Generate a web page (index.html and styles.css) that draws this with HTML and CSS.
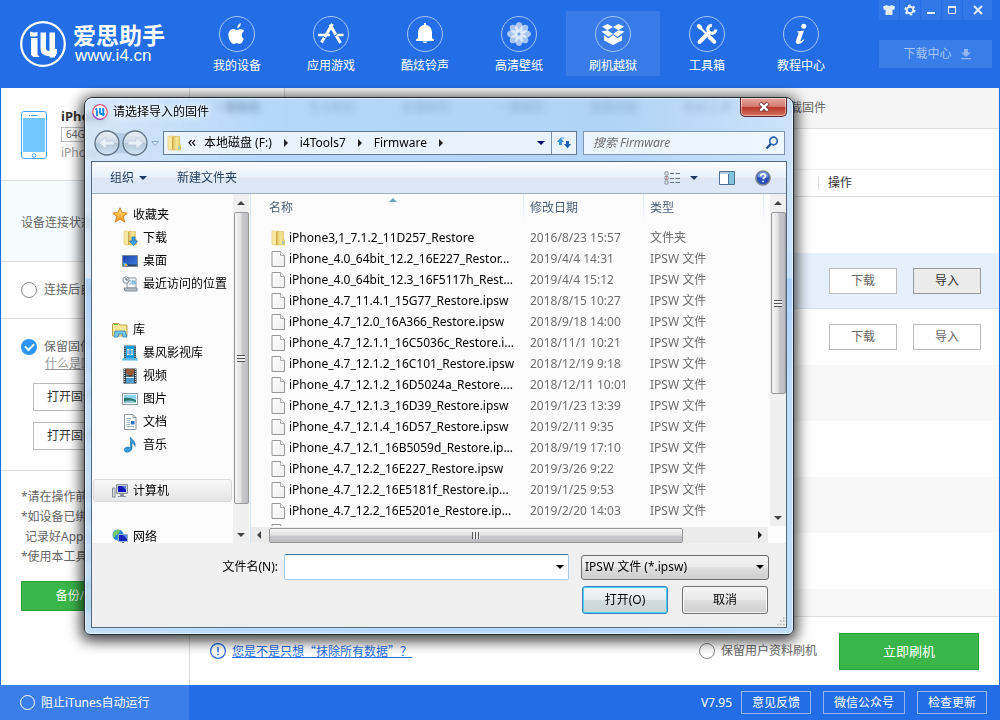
FILE: index.html
```html
<!DOCTYPE html>
<html lang="zh-CN">
<head>
<meta charset="utf-8">
<title>爱思助手</title>
<link rel="stylesheet" href="styles.css">
</head>
<body>
<svg class="defs" width="0" height="0" aria-hidden="true">
  <defs>
    <linearGradient id="gFolder" x1="0" x2="1" y1="0" y2="0"><stop offset="0" stop-color="#e3c768"/><stop offset=".5" stop-color="#f6e79a"/><stop offset="1" stop-color="#e6c962"/></linearGradient>
    <linearGradient id="gPage" x1="0" x2="1" y1="0" y2="1"><stop offset="0" stop-color="#fff"/><stop offset="1" stop-color="#eee"/></linearGradient>
    <linearGradient id="gStar" x1="0" x2="0" y1="0" y2="1"><stop offset="0" stop-color="#ffe27a"/><stop offset="1" stop-color="#ff9a1f"/></linearGradient>
    <linearGradient id="gScreen" x1="0" x2="1" y1="0" y2="1"><stop offset="0" stop-color="#1c3fa8"/><stop offset="1" stop-color="#3f86e0"/></linearGradient>
    <linearGradient id="gOrb" x1="0" x2="0" y1="0" y2="1"><stop offset="0" stop-color="#e9eff5"/><stop offset=".48" stop-color="#cddae6"/><stop offset=".52" stop-color="#b3c7d9"/><stop offset="1" stop-color="#d4e6f6"/></linearGradient>
    <symbol id="folder" viewBox="0 0 16 16"><path d="M2 1h7v14H3l-1-1z" fill="#f7e99f" stroke="#e3cb78" stroke-width=".6"/><path d="M7 1.500h6.500V9l1 1v5H8l-1-1z" fill="url(#gFolder)" stroke="#d2b04e" stroke-width=".5"/><path d="M6.500 2v13" stroke="#cda748"/><path d="M13 11v3" stroke="#5cb8e8"/></symbol>
    <symbol id="page" viewBox="0 0 14 16"><path d="M1 .5h8.500l4 4v11H1z" fill="url(#gPage)" stroke="#979797"/><path d="M9.500.5v4h4" fill="#fff" stroke="#979797" stroke-width=".8"/></symbol>
  </defs>
</svg>

<div class="app">
  <header class="header">
    <div class="brand">
      <svg class="brand-mark" viewBox="0 0 46 46"><circle cx="23" cy="23" r="21.800" fill="none" stroke="#fff" stroke-width="2.200"/><g fill="#fff"><path d="M10 10.500q4 1.500 7.500.5v4q-4 1-7.500 0z"/><path d="M11 17h6.500v16.500l2 2.500h-6L11 34z"/><path d="M20.500 11.500h5.500V27q0 3 3 3v5q-8.500 0-8.500-7.500z"/><path d="M29.500 11.500H35V28h2v5h-2v3.500h-5.500z"/><path d="M25 30h11v5H27z"/></g></svg>
      <div class="brand-text"><span class="brand-name">爱思助手</span><span class="brand-url">www.i4.cn</span></div>
    </div>
    <nav class="nav">
      <a class="nav-item" href="#"><svg viewBox="0 0 36 36"><circle class="ring" cx="18" cy="18" r="17.500"/><path fill="#fff" d="M18.200 12.200c.2-2.600 1.600-4.600 3.600-5.200.2 2.500-1.400 4.800-3.600 5.200zM24.800 22.800c-.8 2.400-2.300 5.200-4.200 5.200-1.100 0-1.500-.7-2.900-.7s-1.900.7-2.900.7c-2.400 0-5.400-4.800-5.400-9 0-3.600 2.200-5.900 4.800-5.900 1.500 0 2.600 1 3.500 1s2.200-1.100 4-1.100c1.500 0 2.700.7 3.500 1.900-3.300 1.900-2.800 6.400-.4 7.900z"/></svg>我的设备</a>
      <a class="nav-item" href="#"><svg viewBox="0 0 36 36"><circle class="ring" cx="18" cy="18" r="17.500"/><g fill="none" stroke="#fff"><path stroke-width="3" d="M19.500 8L8.500 26.500M17 8.500L27.500 27"/><path stroke-width="2.500" d="M5 19h12M22 19h8.500"/><path stroke="#236ee7" stroke-width="1" d="M10 20.500l3 2M21.500 20l3-2"/></g></svg>应用游戏</a>
      <a class="nav-item" href="#"><svg viewBox="0 0 36 36"><circle class="ring" cx="18" cy="18" r="17.500"/><path fill="#fff" d="M17 7h2v2c4 .6 6 3.800 6 8v5l2 1.500V25H9v-1.500L11 22v-5c0-4.200 2-7.400 6-8zM15.500 25.500h5q-.5 1.500-2.500 1.500t-2.500-1.500z"/></svg>酷炫铃声</a>
      <a class="nav-item" href="#"><svg viewBox="0 0 36 36"><circle class="ring" cx="18" cy="18" r="17.500"/><g fill="#fff" fill-opacity=".6"><ellipse cx="18" cy="11.500" rx="3.800" ry="5.500"/><ellipse cx="18" cy="24.500" rx="3.800" ry="5.500"/><ellipse cx="11.500" cy="18" rx="5.500" ry="3.800"/><ellipse cx="24.500" cy="18" rx="5.500" ry="3.800"/><g transform="rotate(45 18 18)"><ellipse cx="18" cy="11.500" rx="3.800" ry="5.500"/><ellipse cx="18" cy="24.500" rx="3.800" ry="5.500"/><ellipse cx="11.500" cy="18" rx="5.500" ry="3.800"/><ellipse cx="24.500" cy="18" rx="5.500" ry="3.800"/></g></g><circle cx="18" cy="18" r="1.500" fill="#75a3ef"/></svg>高清壁纸</a>
      <a class="nav-item nav-active" href="#"><svg viewBox="0 0 36 36"><circle class="ring" cx="18" cy="18" r="17.500"/><path fill="#fff" d="M7 10.500l5.500-2.500 5.500 3-5.500 3.200zM18 11l5.500-3 5.500 2.500-5.500 3.700zM6.500 15.500l6-1.300 5.500 3.800-4.500 2.700zM18 18l5.500-3.800 6 1.300-7 5.200zM9 19.500l4.500 2.700 4.500-3.200 4.500 3.200 4.500-2.700v5L18 29l-9-4.500z"/></svg>刷机越狱</a>
      <a class="nav-item" href="#"><svg viewBox="0 0 36 36"><circle class="ring" cx="18" cy="18" r="17.500"/><g fill="none" stroke="#fff"><path stroke-width="2" d="M10 10.500l8 8"/><path stroke-width="4" stroke-linecap="round" d="M9.800 10l1.500 1.500M20.500 21l4.800 4.800M10.500 26l9-9"/><path stroke-width="3.200" d="M22.800 9.300a4 4 0 1 0 4 4.200"/></g></svg>工具箱</a>
      <a class="nav-item" href="#"><svg viewBox="0 0 36 36"><circle class="ring" cx="18" cy="18" r="17.500"/><circle cx="20.800" cy="10.300" r="2.500" fill="#fff"/><path fill="#fff" d="M14 15.500l7-1-3.500 10c-.3 1.200.5 1.200 3-1.200l.7.700c-2.400 3-4.400 4-6.200 4-2 0-2.500-1.500-2-3.200l2.500-7.300c.2-.8-.2-1.200-1.500-1.200z"/></svg>教程中心</a>
    </nav>
    <div class="header-right">
      <div class="window-buttons">
        <button aria-label="皮肤"><svg viewBox="0 0 14 14"><path fill="#e4edfc" d="M4.500 2Q7 4 9.500 2L13 3.500l-.8 3.500-1.700-.5V12h-7V6.500L1.800 7 1 3.500z"/></svg></button>
        <button aria-label="设置"><svg viewBox="0 0 14 14"><circle cx="7" cy="7" r="3.300" fill="none" stroke="#e4edfc" stroke-width="2"/><circle cx="7" cy="7" r="4.700" fill="none" stroke="#e4edfc" stroke-width="1.800" stroke-dasharray="2.500 2.400"/></svg></button>
        <button aria-label="最小化"><svg viewBox="0 0 14 14"><path d="M3 10h8" stroke="#e4edfc" stroke-width="2"/></svg></button>
        <button aria-label="最大化"><svg viewBox="0 0 14 14"><path d="M3.500 3.500h7v7h-7z" fill="none" stroke="#e4edfc"/><path d="M3 4h8" stroke="#e4edfc" stroke-width="2"/></svg></button>
        <button class="wide" aria-label="关闭"><svg viewBox="0 0 14 14"><path d="M3 3l8 8M11 3l-8 8" stroke="#e4edfc" stroke-width="2"/></svg></button>
      </div>
      <button class="download-center">下载中心<svg viewBox="0 0 12 12"><path fill="#91b6f3" d="M4 1h4v3.500h3L6 9 1 4.500h3zM1 10h10v1.200H1z"/></svg></button>
    </div>
  </header>

  <main class="main">
    <aside class="side">
      <section class="device">
        <svg class="phone" viewBox="0 0 26 48"><rect x=".5" y=".5" width="25" height="47" rx="2.500" fill="#fff" stroke="#45a5ff"/><path fill="#73c7ff" d="M2 7h22v34H2z"/><path d="M8 4.500h1M10 4.500h7" stroke="#45a5ff"/><circle cx="13" cy="44.500" r="1.800" fill="none" stroke="#45a5ff"/></svg>
        <div class="device-info"><strong>iPhone</strong><span class="capacity">64G</span><span class="device-type">iPhone</span></div>
      </section>
      <section class="status">设备连接状态</section>
      <section class="connect"><label class="option"><input type="radio" name="c">连接后自动</label></section>
      <section class="keep">
        <label class="option"><input type="checkbox" checked>保留固件</label>
        <a class="what" href="#">什么是固件</a>
        <button class="plain-btn">打开固件目录</button>
        <button class="plain-btn">打开固件列表</button>
      </section>
      <section class="notes">
        <p>*请在操作前备</p><p>*如设备已绑定</p><p class="indent">记录好Apple</p><p>*使用本工具箱</p>
        <button class="green-btn">备份/恢复数据</button>
      </section>
    </aside>
    <div class="content">
      <div class="tabs"><a class="tab tab-on" href="#">一键刷机</a><a class="tab" href="#">专业刷机</a><a class="tab" href="#">批量刷机</a><a class="tab" href="#">一键越狱</a><a class="tab" href="#">智能功能</a><a class="tab" href="#">刷机工具</a><a class="tab" href="#">下载固件</a></div>
      <div class="filter"></div>
      <div class="grid-head"><span>操作</span></div>
      <div class="grid-row"></div>
      <div class="grid-row chosen"><button class="cell-btn">下载</button><button class="cell-btn hot">导入</button></div>
      <div class="grid-row"><button class="cell-btn">下载</button><button class="cell-btn">导入</button></div>
      <div class="stripes"></div>
      <div class="actions">
        <svg class="notice" viewBox="0 0 16 16"><circle cx="8" cy="8" r="7.400" fill="none" stroke="#236ee7" stroke-width="1.200"/><path d="M8 4v5.500M8 10.700v1.600" stroke="#236ee7" stroke-width="1.400"/></svg>
        <a class="erase" href="#">您是不是只想“抹除所有数据”？</a>
        <label class="option retain"><input type="radio" name="r">保留用户资料刷机</label>
        <button class="green-btn flash">立即刷机</button>
      </div>
    </div>
  </main>

  <footer class="footer">
    <label class="option itunes"><input type="radio" name="i">阻止iTunes自动运行</label>
    <div class="footer-right"><span>V7.95</span><button>意见反馈</button><button class="mid">微信公众号</button><button>检查更新</button></div>
  </footer>

  <div class="dialog" role="dialog" aria-label="请选择导入的固件">
    <div class="titlebar">
      <svg class="title-icon" viewBox="0 0 16 16"><circle cx="8" cy="8" r="7.300" fill="#fff" stroke="#e24f78" stroke-width="1.200"/><path d="M1 10a7.300 7.300 0 0 0 10 4.700" fill="none" stroke="#9a56d8" stroke-width="1.300"/><path d="M3.500 5h1.800M4.900 6.200v6M8 4v5q0 1 1 1h3.500M11.200 4v8" fill="none" stroke="#1788ee" stroke-width="1.900"/></svg>
      <span class="title-text">请选择导入的固件</span>
      <button class="close" aria-label="关闭"><svg viewBox="0 0 12 10"><path d="M2 1l8 8M10 1L2 9" stroke="#5d2b2b" stroke-width="4"/><path d="M2.300 1.300l7.400 7.400M9.700 1.300L2.300 8.700" stroke="#fff" stroke-width="2.400"/></svg></button>
    </div>
    <div class="locbar">
      <svg class="orbs" viewBox="0 0 66 28"><path d="M14 1.500q14 5 28 0v25q-14-5-28 0z" fill="#a9c3dc" opacity=".7"/><circle cx="14" cy="14" r="12" fill="url(#gOrb)" stroke="#607386" stroke-width="1.300"/><circle cx="42" cy="14" r="12" fill="url(#gOrb)" stroke="#607386" stroke-width="1.300"/><path d="M6 14l7-6v4h8v4h-8v4zM50 14l-7-6v4h-8v4h8v4z" fill="#e7f1fa" stroke="#bccddd" stroke-width=".8"/><path d="M58.500 12.500h7L62 16.500z" fill="#dceafa" stroke="#8ba9c9"/></svg>
      <div class="address">
        <svg class="i16" viewBox="0 0 16 16"><use href="#folder"/></svg>
        <svg class="chev" viewBox="0 0 8 8"><path d="M3.500 1L1 3.800l2.500 2.800M7 1L4.500 3.800 7 6.600" fill="none" stroke="#111" stroke-width="1.200"/></svg>
        <span class="drive">本地磁盘 (F:)</span><i class="tri-right"></i><span>i4Tools7</span><i class="tri-right"></i><span>Firmware</span><i class="tri-right"></i>
        <i class="tri-down navy"></i>
        <button class="refresh" aria-label="刷新"><svg viewBox="0 0 16 16"><path d="M1 7l3.500-4.500L8 7H6v3H3V7z" fill="#3e95dc"/><path d="M5 3h3" stroke="#3e95dc"/><path d="M15 9l-3.500 4.500L8 9h2V6h3v3z" fill="#1f5eb0"/></svg></button>
      </div>
      <label class="search"><input type="text" placeholder="搜索 Firmware" aria-label="搜索"><svg viewBox="0 0 14 14"><circle cx="8.500" cy="5" r="3.800" fill="#eef7ff" stroke="#2a67b5" stroke-width="1.700"/><path d="M5.800 8L1.500 12.500" stroke="#24508e" stroke-width="2.400"/></svg></label>
    </div>
    <div class="client">
      <div class="toolbar">
        <button class="tool">组织<i class="tri-down dark"></i></button>
        <button class="tool">新建文件夹</button>
        <button class="tool view" aria-label="更改视图"><svg viewBox="0 0 16 14"><path d="M1 1h3v3H1zM1 5.500h3v3H1zM1 10h3v3H1z" fill="#fff" stroke="#7d8794" stroke-width=".9"/><path d="M2 7h1" stroke="#e22"/><path d="M6 2.500h4M11.500 2.500H16M6 7.500h4M11.500 7.500H16M6 11.500h4M11.500 11.500H16" stroke="#63738c"/></svg><i class="tri-down dark"></i></button>
        <button class="tool preview" aria-label="预览窗格"><svg viewBox="0 0 16 14"><path d="M.5.500h15v13H.5z" fill="#fff" stroke="#4e6f94"/><path d="M1 2h14" stroke="#b2c8df" stroke-width="2"/><path d="M10 1h5v12h-5z" fill="#7fc3dc"/><path d="M9.500 3v10" stroke="#4e6f94"/></svg></button>
        <button class="tool help" aria-label="帮助"><svg viewBox="0 0 16 16"><circle cx="8" cy="8" r="7" fill="#2950b7" stroke="#7b8290" stroke-width="1.600"/><path d="M2.500 7a5.500 5.500 0 0 1 11 0q-5 2-11 0z" fill="#6c94e4"/><path d="M5.700 6.200q0-2.400 2.400-2.400 2.300 0 2.300 2 0 1.200-1.200 1.900-.9.600-.9 1.500M8.200 10.700v1.600" fill="none" stroke="#fff" stroke-width="1.800"/></svg></button>
      </div>
      <div class="browser">
        <ul class="tree">
          <li><svg class="i16" viewBox="0 0 16 16"><path d="M8 .8l2.100 4.900 5.200.4-4 3.500 1.300 5.400L8 12.100 3.400 15l1.300-5.400-4-3.500 5.200-.4z" fill="url(#gStar)" stroke="#d87a1b" stroke-width=".9"/></svg>收藏夹</li>
          <li class="sub"><svg class="i16" viewBox="0 0 16 16"><use href="#folder"/><path d="M10 7h3v4h2.500L11.500 15.500 7.500 11H10z" fill="#35a4ef" stroke="#1365b3" stroke-width=".7"/></svg>下载</li>
          <li class="sub"><svg class="i16" viewBox="0 0 16 16"><path d="M.5 2.500h15v11H.5z" fill="url(#gScreen)" stroke="#7b8794"/><path d="M1 11.500h14V13H1z" fill="#294063"/><path d="M1.500 13V9q3 1 4.500 4z" fill="#62b5e8"/><path d="M3 11h2v2H3z" fill="#f5c42c"/></svg>桌面</li>
          <li class="sub"><svg class="i16" viewBox="0 0 16 16"><path d="M5 2h9v10H5z" fill="#f4f8fb" stroke="#8b97a2"/><path d="M7 5h2M7 8h2M10 5h3v3h-3z" stroke="#6ab5de" fill="#9ccbe8"/><path d="M2 12h13v3H3z" fill="#b7bfc6" stroke="#848e98"/><circle cx="4" cy="4" r="3.200" fill="#eef3f8" stroke="#808c99"/><path d="M4 2v2h2" fill="none" stroke="#555"/></svg>最近访问的位置</li>
          <li class="gap"></li>
          <li><svg class="i16" viewBox="0 0 16 16"><path d="M.5 3l1-1.500h5L8 3h7v11H.5z" fill="#f8e594" stroke="#bca04a"/><path d="M2 2.500h4" stroke="#5dc346"/><path d="M2 15l1-6h10l2 6h-4l-.5-3h-4L6 15z" fill="#74c6e9" stroke="#3989b6" stroke-width=".8"/></svg>库</li>
          <li class="sub"><svg class="i16" viewBox="0 0 16 16"><path d="M2 .5h12v13H2z" fill="#355566"/><path d="M4 1h8v12H4z" fill="#16a0f4"/><path d="M3 1v12M13 1v12" stroke="#b9d7e6" stroke-dasharray="1 1"/><path d="M5 4h6v6H5z" fill="#fff"/><path d="M5 6h6M8 4v6M5 8h6" stroke="#1684dd"/><path d="M1 13h14l1 2.500H0z" fill="#5dbaf0"/></svg>暴风影视库</li>
          <li class="sub"><svg class="i16" viewBox="0 0 16 16"><path d="M1.500.5h13v15h-13z" fill="#26343c"/><path d="M4 1h8v14H4z" fill="#4e9cc9"/><path d="M4 1h8v5L8 9 4 5z" fill="#995a3c"/><path d="M4 8l4 1 4-2v3H4z" fill="#c9e5ee"/><path d="M4 8h8" stroke="#222"/><path d="M2.700 1v14M13.300 1v14" stroke="#fff" stroke-dasharray="1 1"/></svg>视频</li>
          <li class="sub"><svg class="i16" viewBox="0 0 16 16"><path d="M.5 2.500h15v11H.5z" fill="#fff" stroke="#8c969c"/><path d="M2 4h12v8H2z" fill="#8fd3f2"/><path d="M2 7q5-1 12 2v3H2z" fill="#237a6b"/><path d="M2 10.500q6-2 12 .5v1H2z" fill="#8dc7da"/></svg>图片</li>
          <li class="sub"><svg class="i16" viewBox="0 0 16 16"><path d="M2.500.5H11l3 3v12H2.500z" fill="#fff" stroke="#8c969c"/><path d="M11 .5v3h3" fill="none" stroke="#8c969c"/><path d="M4.500 4.500H9M4.500 6.500H8M4.500 8.500H8M4.500 10.500H8M4.500 12.500H12" stroke="#9bb3c7"/><path d="M9 7h3.500v3.500H9z" fill="#286fce"/></svg>文档</li>
          <li class="sub"><svg class="i16" viewBox="0 0 16 16"><path d="M9 .5c1 3 5 3.500 4 9-.5-2-1.500-3-3-3.500v6C9 14.500 6 15.500 4 15c-3-1-2-5 2-5l2.500.5V.5z" fill="#329bd8" stroke="#17679f" stroke-width=".6"/></svg>音乐</li>
          <li class="gap"></li>
          <li class="current"><svg class="i16" viewBox="0 0 16 16"><path d="M.5 5h2.500v9H.5z" fill="#dce3e6" stroke="#838c93"/><path d="M4.500 1.500h11v9h-11z" fill="#c7ced6" stroke="#8b939b"/><path d="M6 3h8v6H6z" fill="#1414b8"/><path d="M10 3h4v4z" fill="#567dea"/><path d="M8 11h4v2h2v1H6v-1h2z" fill="#8d959d"/></svg>计算机</li>
          <li class="gap"></li>
          <li><svg class="i16" viewBox="0 0 16 16"><circle cx="6" cy="6" r="5.500" fill="#2889d9"/><path d="M2 3q3-3 6-2l-1 3-3 2-2 3q-2-3 0-6zM8 5l3 1-2 4-3-1z" fill="#72d064"/><path d="M6.500 5.500h9v7h-9z" fill="#1322b9" stroke="#9ab1d7"/><path d="M11 6h4v4z" fill="#5a82ee"/><path d="M10 13h2v3h-2z" fill="#737f99"/></svg>网络</li>
        </ul>
        <div class="vscroll tree-scroll"><i class="tri-up"></i><div class="thumb"><b class="grip-v"></b></div><i class="tri-down end"></i></div>
        <div class="files">
          <div class="files-top">
            <div class="list">
              <table>
                <colgroup><col><col class="c-date"><col class="c-type"><col class="c-rest"></colgroup>
                <thead><tr><th><div class="name-head">名称<i class="sort"></i></div></th><th>修改日期</th><th>类型</th><th></th></tr></thead>
                <tbody>
                  <tr><td><span class="file"><svg class="i16" viewBox="0 0 16 16"><use href="#folder"/></svg>iPhone3,1_7.1.2_11D257_Restore</span></td><td>2016/8/23 15:57</td><td>文件夹</td><td></td></tr>
                  <tr><td><span class="file"><svg class="i16" viewBox="0 0 14 16"><use href="#page"/></svg>iPhone_4.0_64bit_12.2_16E227_Restor...</span></td><td>2019/4/4 14:31</td><td>IPSW 文件</td><td></td></tr>
                  <tr><td><span class="file"><svg class="i16" viewBox="0 0 14 16"><use href="#page"/></svg>iPhone_4.0_64bit_12.3_16F5117h_Rest...</span></td><td>2019/4/4 15:12</td><td>IPSW 文件</td><td></td></tr>
                  <tr><td><span class="file"><svg class="i16" viewBox="0 0 14 16"><use href="#page"/></svg>iPhone_4.7_11.4.1_15G77_Restore.ipsw</span></td><td>2018/8/15 10:27</td><td>IPSW 文件</td><td></td></tr>
                  <tr><td><span class="file"><svg class="i16" viewBox="0 0 14 16"><use href="#page"/></svg>iPhone_4.7_12.0_16A366_Restore.ipsw</span></td><td>2018/9/18 14:00</td><td>IPSW 文件</td><td></td></tr>
                  <tr><td><span class="file"><svg class="i16" viewBox="0 0 14 16"><use href="#page"/></svg>iPhone_4.7_12.1.1_16C5036c_Restore.i...</span></td><td>2018/11/1 10:21</td><td>IPSW 文件</td><td></td></tr>
                  <tr><td><span class="file"><svg class="i16" viewBox="0 0 14 16"><use href="#page"/></svg>iPhone_4.7_12.1.2_16C101_Restore.ipsw</span></td><td>2018/12/19 9:18</td><td>IPSW 文件</td><td></td></tr>
                  <tr><td><span class="file"><svg class="i16" viewBox="0 0 14 16"><use href="#page"/></svg>iPhone_4.7_12.1.2_16D5024a_Restore....</span></td><td>2018/12/11 10:01</td><td>IPSW 文件</td><td></td></tr>
                  <tr><td><span class="file"><svg class="i16" viewBox="0 0 14 16"><use href="#page"/></svg>iPhone_4.7_12.1.3_16D39_Restore.ipsw</span></td><td>2019/1/23 13:39</td><td>IPSW 文件</td><td></td></tr>
                  <tr><td><span class="file"><svg class="i16" viewBox="0 0 14 16"><use href="#page"/></svg>iPhone_4.7_12.1.4_16D57_Restore.ipsw</span></td><td>2019/2/11 9:35</td><td>IPSW 文件</td><td></td></tr>
                  <tr><td><span class="file"><svg class="i16" viewBox="0 0 14 16"><use href="#page"/></svg>iPhone_4.7_12.1_16B5059d_Restore.ip...</span></td><td>2018/9/19 17:10</td><td>IPSW 文件</td><td></td></tr>
                  <tr><td><span class="file"><svg class="i16" viewBox="0 0 14 16"><use href="#page"/></svg>iPhone_4.7_12.2_16E227_Restore.ipsw</span></td><td>2019/3/26 9:22</td><td>IPSW 文件</td><td></td></tr>
                  <tr><td><span class="file"><svg class="i16" viewBox="0 0 14 16"><use href="#page"/></svg>iPhone_4.7_12.2_16E5181f_Restore.ip...</span></td><td>2019/1/25 9:53</td><td>IPSW 文件</td><td></td></tr>
                  <tr><td><span class="file"><svg class="i16" viewBox="0 0 14 16"><use href="#page"/></svg>iPhone_4.7_12.2_16E5201e_Restore.ip...</span></td><td>2019/2/20 14:03</td><td>IPSW 文件</td><td></td></tr>
                  <tr><td><span class="file"><svg class="i16" viewBox="0 0 14 16"><use href="#page"/></svg></span></td><td></td><td></td><td></td></tr>
                </tbody>
              </table>
            </div>
            <div class="vscroll list-scroll"><i class="tri-up"></i><div class="thumb"><b class="grip-v"></b></div><i class="tri-down end"></i></div>
          </div>
          <div class="hscroll"><i class="tri-left"></i><div class="hthumb"><b class="grip-h"></b></div><i class="tri-right end"></i></div>
        </div>
      </div>
      <div class="form">
        <label for="fname">文件名(N):</label>
        <div class="combo"><input id="fname" type="text"><i class="tri-down black"></i></div>
        <div class="filetype"><select aria-label="文件类型"><option>IPSW 文件 (*.ipsw)</option></select><i class="tri-down black"></i></div>
        <div class="form-buttons"><button class="win-btn default">打开(O)</button><button class="win-btn">取消</button></div>
        <svg class="grip" viewBox="0 0 9 9"><path d="M7 1h1.500M4 4h1.500M7 4h1.500M1 7.500h1.500M4 7.500h1.500M7 7.500h1.500" stroke="#b5b5b5" stroke-width="1.500"/></svg>
      </div>
    </div>
  </div>
</div>
</body>
</html>
```

FILE: styles.css
```css
* { box-sizing: border-box; }
body { margin: 0; font: 12px/18px "Noto Sans", "Noto Sans CJK SC", sans-serif; color: #666; }
button, input, select { font: inherit; color: inherit; margin: 0; padding: 0; border: 0; background: none; }
a { color: inherit; text-decoration: none; }
p, ul { margin: 0; padding: 0; }
svg { display: block; flex: none; }
.defs { position: absolute; }
.app { position: relative; min-height: 100vh; display: flex; flex-direction: column; }

/* header */
.header { display: flex; background: #236ee7; color: #fff; height: 88px; }
.brand { width: 190px; padding: 0 0 0 20px; display: flex; align-items: center; gap: 7px; }
.brand-mark { width: 46px; height: 46px; }
.brand-text { display: flex; flex-direction: column; gap: 2px; }
.brand-name { font: bold 23px/22px "Noto Sans CJK SC", sans-serif; }
.brand-url { font: 17px/18px "Liberation Sans", sans-serif; padding-left: 2px; }
.nav { display: flex; padding-top: 11px; flex: 1; }
.nav-item { width: 94px; height: 65px; padding-top: 5px; display: flex; flex-direction: column; align-items: center; gap: 5px; }
.nav-item svg { width: 36px; height: 36px; }
.ring { fill: none; stroke: #a7c5f5; stroke-width: 1; }
.nav-active { background: #397ce9; }
.header-right { width: 113px; margin-right: 8px; display: flex; flex-direction: column; gap: 20px; }
.window-buttons { display: flex; gap: 1px; }
.window-buttons button { width: 20px; height: 20px; background: #3177e8; display: grid; place-items: center; }
.window-buttons .wide { flex: 1; }
.window-buttons svg { width: 14px; height: 14px; }
.download-center { height: 28px; background: #397de9; color: #a7c5f5; display: flex; align-items: center; justify-content: center; gap: 8px; padding-left: 4px; }
.download-center svg { width: 12px; height: 12px; }

/* shared controls */
.option { display: flex; align-items: center; gap: 7px; }
.option input { appearance: none; flex: none; width: 16px; height: 16px; border: 1px solid #888; border-radius: 50%; background: #fff; }
.option input[type="checkbox"] { border: 0; background: #2b95f5; display: grid; place-items: center; }
.option input:checked::after { content: ""; width: 7px; height: 4px; border: solid #fff; border-width: 0 0 2px 2px; transform: rotate(-45deg); margin-bottom: 2px; }
.green-btn { background: #3ab54a; border: 1px solid #26a338; color: #fff; }

/* main */
.main { flex: 1; display: flex; border: solid #236ee7; border-width: 0 1px; background: #fff; }
.side { width: 189px; border-right: 1px solid #ddd; }
.side section { border-bottom: 1px solid #ddd; padding-left: 20px; white-space: nowrap; overflow: hidden; }
.side .notes { border: 0; }
.device { height: 93px; display: flex; gap: 14px; }
.side .device { padding-top: 23px; }
.phone { width: 26px; height: 48px; }
.device-info { display: flex; flex-direction: column; align-items: flex-start; color: #999; gap: 2px; margin-top: -4px; }
.device-info strong { color: #333; font-size: 13px; }
.capacity { border: 1px solid #bbb; font-size: 10px; line-height: 13px; padding: 0 4px; color: #666; }
.status { height: 81px; display: flex; align-items: center; padding-top: 4px; background: #f7fcff; }
.connect { height: 57px; display: flex; align-items: center; }
.keep { height: 152px; padding-top: 19px; display: flex; flex-direction: column; align-items: flex-start; }
.what { margin-left: 24px; color: #999; text-decoration: underline; line-height: 16px; }
.plain-btn { margin: 11px 0 0 12px; width: 100px; height: 28px; border: 1px solid #bbb; color: #333; background: #fff; }
.side .notes { padding-top: 16px; line-height: 20px; display: flex; flex-direction: column; align-items: flex-start; }
.indent { padding-left: 4px; }
.notes .green-btn { width: 146px; height: 30px; margin-top: 14px; }
.content { flex: 1; display: flex; flex-direction: column; }
.tabs { display: flex; height: 41px; background: #f5f5f5; border-bottom: 1px solid #ddd; }
.tab { width: 94px; line-height: 40px; text-align: center; }
.tab-on { width: 95px; border-right: 1px solid #ccc; font-weight: bold; color: #333; background: #fbfbfb; }
.filter { height: 40px; }
.grid-head { height: 28px; border: solid #eee; border-width: 1px 0; border-bottom-color: #ddd; color: #333; display: flex; align-items: center; justify-content: flex-end; padding-right: 20px; }
.grid-head span { width: 161px; line-height: 14px; border-left: 1px solid #ddd; padding-left: 9px; }
.grid-row { height: 56px; display: flex; align-items: center; justify-content: flex-end; gap: 16px; padding-right: 18px; }
.chosen { background: #e5f0fc; border-bottom: 1px solid #d5e2ef; }
.cell-btn { width: 68px; height: 26px; border: 1px solid #bbb; background: #fff; }
.hot { background: #ececec; border-color: #999; color: #333; }
.stripes { flex: 1; min-height: 252px; border-bottom: 1px solid #ddd; background: repeating-linear-gradient(#f8f8f8 0 56px, #fff 56px 112px); }
.actions { height: 68px; display: flex; align-items: center; padding: 0 20px; }
.notice { width: 16px; height: 16px; margin-right: 6px; }
.erase { font-family: "Noto Sans CJK SC", sans-serif; color: #236ee7; text-decoration: underline; }
.retain { margin: 0 22px 0 auto; gap: 6px; }
.flash { width: 140px; height: 37px; font-size: 13px; }

/* footer */
.footer { height: 35px; background: #236ee7; color: #fff; display: flex; justify-content: space-between; align-items: center; }
.itunes { width: 189px; height: 35px; padding-left: 20px; background: #3b7de9; gap: 6px; }
.itunes input { border-color: #fff; background: none; width: 15px; height: 15px; }
.footer-right { display: flex; align-items: center; gap: 12px; padding-right: 13px; }
.footer-right span { margin-right: -3px; }
.footer-right button { width: 70px; height: 23px; line-height: 20px; border: 1px solid #91b6f3; }
.footer-right .mid { width: 82px; }

/* arrows */
.tri-right, .tri-left, .tri-up, .tri-down { width: 0; height: 0; flex: none; border: 4px solid transparent; }
.tri-right { border-width: 4px 0 4px 4px; border-left-color: #222; }
.tri-left { border-width: 4px 4px 4px 0; border-right-color: #444; }
.tri-up { border-width: 0 4px 4px; border-bottom-color: #444; }
.tri-down { border-width: 4px 4px 0; border-top-color: #444; }
.navy { border-top-color: #00006a; }
.dark { border-top-color: #1e3a5f; }
.black { border-top-color: #000; }

/* file dialog */
.dialog { position: absolute; left: 84px; top: 97px; width: 710px; padding: 0 6px 6px; border: 1px solid #222b38; border-radius: 8px 8px 6px 6px; color: #000; background: linear-gradient(transparent 180px, rgba(150, 199, 248, .6) 181px, rgba(185, 218, 252, .6) 300px), linear-gradient(90deg, rgba(200, 221, 246, .72), rgba(160, 205, 250, .76) 25%, rgba(155, 200, 245, .76) 75%, rgba(190, 219, 252, .76)); backdrop-filter: blur(3px); box-shadow: inset 0 0 0 1px rgba(255, 255, 255, .6), 0 3px 14px 3px rgba(0, 0, 0, .75); }
.titlebar { height: 28px; display: flex; gap: 5px; padding-left: 1px; }
.title-icon { width: 16px; height: 16px; margin-top: 6px; }
.title-text { line-height: 27px; flex: 1; text-shadow: 0 0 6px #fff, 0 0 8px #fff; }
.close { width: 47px; height: 19px; border: 1px solid #5b2a2e; border-top: 0; border-radius: 0 0 5px 5px; display: grid; place-items: center; background: linear-gradient(#e4a9a0, #d3796c 48%, #b8352a 50%, #d3715a); box-shadow: inset 0 0 0 1px rgba(255, 255, 255, .45); }
.close svg { width: 12px; height: 10px; }
.locbar { height: 35px; display: flex; align-items: center; padding: 0 2px 1px; }
.orbs { width: 66px; height: 28px; }
.address { flex: 1; height: 24px; margin: 0 6px 0 4px; display: flex; align-items: center; border: 1px solid #617a96; background: rgba(245, 250, 255, .8); padding-left: 2px; gap: 12px; }
.i16 { width: 16px; height: 16px; }
.chev { width: 8px; height: 8px; margin: 0 -4px 0 -6px; }
.address .navy { margin-left: auto; margin-right: -6px; }
.refresh { width: 25px; height: 22px; border-left: 1px solid #7c91aa; display: grid; place-items: center; }
.refresh svg { width: 16px; height: 16px; }
.search { width: 202px; height: 24px; border: 1px solid #7d95b0; background: rgba(245, 250, 255, .85); display: flex; align-items: center; padding: 0 5px 0 9px; }
.search input { flex: 1; min-width: 0; outline: 0; }
.search input::placeholder { color: #6d6d6d; opacity: 1; font-style: italic; }
.search svg { width: 14px; height: 14px; }
.client { border: 1px solid #54687e; background: #fcfcfc; }
.toolbar { height: 32px; padding: 0 15px 0 18px; display: flex; align-items: center; color: #1e395b; border-bottom: 1px solid #a0afc3; background: linear-gradient(#fafdff, #e9f1fb 48%, #dce6f4 52%, #dde8f6); }
.tool { display: flex; align-items: center; gap: 5px; margin-right: 30px; }
.tool svg { width: 16px; height: 14px; }
.view { gap: 10px; margin: 0 21px 0 auto; }
.preview { margin-right: 20px; }
.help { margin: 0; }
.tool.help svg { height: 16px; }
.browser { display: flex; height: 349px; overflow: hidden; }
.tree { width: 141px; padding-top: 9px; list-style: none; }
.tree li { height: 23px; padding-left: 20px; display: flex; align-items: center; gap: 5px; white-space: nowrap; }
.tree .sub { padding-left: 30px; }
.tree .current { margin: 0 1px; padding-left: 18px; border: 1px solid #d9d9d9; border-radius: 3px; background: linear-gradient(#f8f8f8, #e5e5e5); }
.vscroll { width: 16px; background: #f0f0f0; display: flex; flex-direction: column; align-items: center; padding: 7px 0 6px; }
.thumb { width: 15px; margin-top: 7px; border: 1px solid #979797; border-radius: 2px; display: grid; place-items: center; background: linear-gradient(90deg, #f5f5f5, #e3e3e5 45%, #c9c9cd 55%, #bcbcc2); }
.tree-scroll .thumb { height: 292px; }
.list-scroll .thumb { height: 182px; }
.end { margin-top: auto; }
.grip-v { width: 8px; height: 7px; background: repeating-linear-gradient(#555 0 1px, #eee 1px 3px); }
.grip-h { width: 8px; height: 7px; background: repeating-linear-gradient(90deg, #555 0 1px, #eee 1px 3px); }
.files { flex: 1; min-width: 0; margin-left: 1px; border-left: 1px solid #d6e5f5; display: flex; flex-direction: column; }
.files-top { height: 332px; display: flex; }
.list { flex: 1; min-width: 0; overflow: hidden; }
table { width: 100%; border-collapse: collapse; table-layout: fixed; }
.c-date, .c-type { width: 120px; }
.c-rest { width: 6px; }
th { height: 33px; padding: 4px 6px 0; vertical-align: top; text-align: left; font-weight: normal; line-height: 20px; color: #4c607a; white-space: nowrap; background: linear-gradient(#dfeaf6, #f3f7fb) right top / 1px 24px no-repeat; }
th:first-child { padding-left: 18px; }
th:last-child { background: none; }
.name-head { display: flex; align-items: flex-start; gap: 96px; }
.sort { border: solid transparent; border-width: 0 4px 4px; border-bottom-color: #67a5c9; }
td { height: 21px; padding: 0 6px; color: #6d6d6d; white-space: nowrap; line-height: 20px; }
td:first-child { padding-left: 19px; color: #000; }
.file { display: flex; align-items: center; gap: 3px; height: 21px; }
.hscroll { height: 16px; margin: 1px 18px 0 0; padding: 0 6px; background: #ececec; display: flex; align-items: center; }
.hthumb { width: 414px; height: 15px; margin-left: 8px; border: 1px solid #979797; border-radius: 2px; display: grid; place-items: center; background: linear-gradient(#f5f5f5, #e3e3e5 45%, #c9c9cd 55%, #bcbcc2); }
.hscroll .end { margin: 0 0 0 auto; }
.form { background: #f0f0f0; display: grid; grid-template-columns: 188px 1fr 188px 17px; gap: 6px 0; align-items: center; padding: 11px 0 1px; }
.form > label { text-align: right; padding-right: 2px; }
.combo, .filetype { display: grid; align-items: center; height: 26px; }
.combo > *, .filetype > * { grid-area: 1 / 1; }
.combo i, .filetype i { justify-self: end; margin-right: 5px; }
.combo { margin: 0 12px 0 4px; }
.combo input { width: 100%; height: 26px; background: #fff; border: 1px solid #a9cde9; border-top-color: #3d7bad; border-radius: 2px; padding: 0 18px 0 4px; outline: 0; }
.filetype select { appearance: none; width: 100%; height: 25px; padding: 0 18px 0 3px; border: 1px solid #707070; border-radius: 3px; background: linear-gradient(#f2f2f2, #ebebeb 48%, #dddddd 52%, #cfcfcf); }
.form-buttons { grid-column: 2 / 4; display: flex; justify-content: flex-end; gap: 14px; padding-right: 1px; }
.win-btn { width: 86px; height: 28px; border: 1px solid #707070; border-radius: 3px; background: linear-gradient(#f2f2f2, #ebebeb 48%, #dddddd 52%, #cfcfcf); box-shadow: inset 0 0 0 1px #fafafa; }
.default { border-color: #3c7fb1; box-shadow: inset 0 0 0 1px #46d2fa; background: linear-gradient(#f2f5f6, #e6ecee 48%, #d2dcdf 52%, #cbd4d6); }
.grip { grid-column: 4; grid-row: 3; width: 9px; height: 9px; justify-self: end; margin: -3px 1px 0 0; }
```
